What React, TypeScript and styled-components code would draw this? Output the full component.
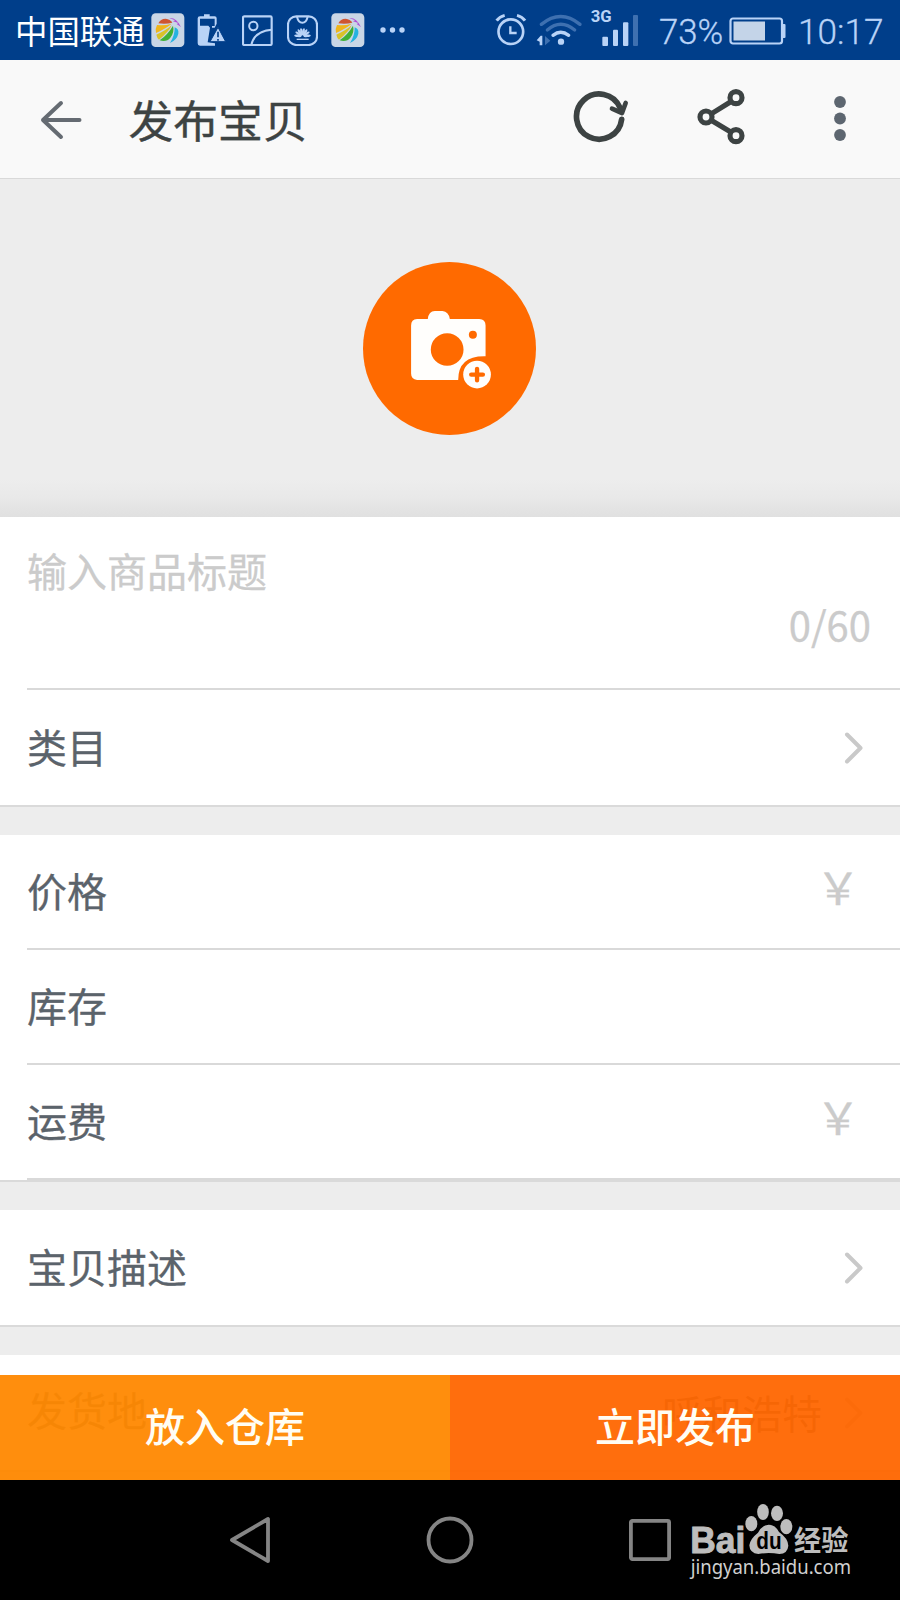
import React from 'react';
import styled, { createGlobalStyle } from 'styled-components';

const GlobalStyle = createGlobalStyle`
  * { box-sizing: border-box; }
  body { margin: 0; background: #000; }
`;

const Screen = styled.div`
  width: 900px;
  height: 1600px;
  display: flex;
  flex-direction: column;
  overflow: hidden;
  background: #ededed;
  font-family: 'Noto Sans CJK SC', sans-serif;
  color: #5b636b;
`;

const Icon = styled.svg<{ $w: number; $h: number; $ml?: number; $mt?: number }>`
  display: block;
  flex: none;
  width: ${(p) => p.$w}px;
  height: ${(p) => p.$h}px;
  margin-left: ${(p) => p.$ml ?? 0}px;
  margin-top: ${(p) => p.$mt ?? 0}px;
`;

const StatusBar = styled.div`
  flex: none;
  height: 60px;
  display: flex;
  align-items: flex-start;
  justify-content: space-between;
  background: #003e8a;
`;

const StatusGroup = styled.div`
  display: flex;
  align-items: flex-start;
`;

const Carrier = styled.span`
  width: 135px;
  margin-left: 15px;
  font-size: 32.4px;
  line-height: 60px;
  height: 60px;
  color: #fff;
  white-space: nowrap;
`;

const StatusText = styled.span<{ $w: number; $ml?: number; $size?: number }>`
  width: ${(p) => p.$w}px;
  margin-left: ${(p) => p.$ml ?? 0}px;
  font-family: Roboto, sans-serif;
  font-weight: 300;
  font-size: ${(p) => p.$size ?? 34.5}px;
  line-height: 60px;
  height: 60px;
  margin-top: 2px;
  color: #b9d3f7;
  white-space: nowrap;
  -webkit-text-stroke: 0.3px #b9d3f7;
`;

const Header = styled.header`
  flex: none;
  height: 119px;
  display: flex;
  align-items: flex-start;
  background: #f9f9f9;
  border-bottom: 1px solid #d9d9d9;
`;

const Title = styled.h1`
  margin: 0 0 0 47px;
  width: 443px;
  font-size: 44.8px;
  font-weight: 400;
  line-height: 118px;
  height: 118px;
  color: #3d4343;
  -webkit-text-stroke: 0.4px #3d4343;
`;

const Banner = styled.section`
  flex: none;
  height: 338px;
  display: flex;
  align-items: center;
  justify-content: center;
  padding-right: 2px;
  background: linear-gradient(#ededed 300px, #e9e9e9 318px, #e0e0e0);
`;

const CameraButton = styled.button`
  width: 173px;
  height: 173px;
  padding: 0;
  border: 0;
  border-radius: 50%;
  background: #ff6a00;
`;

const Content = styled.main`
  flex: none;
  height: 963px;
  position: relative;
  overflow: hidden;
`;

const Group = styled.section`
  background: #fff;
  border-bottom: 2px solid #dadada;
  margin-bottom: 28px;
`;

const TitleField = styled.div`
  height: 173px;
  margin-left: 27px;
  padding: 23px 29px 0 0;
  border-bottom: 2px solid #d9d9d9;
  color: #cbcbcb;
  font-size: 40px;
  line-height: 60px;
  -webkit-text-stroke: 0.3px #cbcbcb;
`;

const Counter = styled.div`
  margin-top: -6px;
  text-align: right;
`;

const Row = styled.div<{ $height: number; $line?: boolean; $right?: number }>`
  height: ${(p) => p.$height}px;
  margin-left: 27px;
  padding-right: ${(p) => p.$right ?? 36}px;
  display: flex;
  align-items: center;
  border-bottom: ${(p) => (p.$line ? '2px solid #d9d9d9' : '0')};
  font-size: 40px;
`;

const Label = styled.span<{ $lift?: number }>`
  flex: 1;
  line-height: 60px;
  padding-bottom: ${(p) => p.$lift ?? 4}px;
  -webkit-text-stroke: 0.3px currentColor;
`;

const Value = styled.span`
  line-height: 60px;
  padding-bottom: 2px;
  margin-right: 22px;
`;

const Yen = styled.span`
  line-height: 60px;
  padding-bottom: 11px;
  font-size: 44px;
  color: #cbcbcb;
  -webkit-text-stroke: 0.4px #cbcbcb;
`;

const ActionBar = styled.div`
  position: absolute;
  left: 0;
  right: 0;
  bottom: 0;
  height: 105px;
  display: grid;
  grid-template-columns: 1fr 1fr;
`;

const Action = styled.button<{ $color: string }>`
  border: 0;
  padding: 0 0 6px;
  background: ${(p) => p.$color};
  color: #fffdf4;
  font: 500 40px/60px 'Noto Sans CJK SC', sans-serif;
`;

const NavBar = styled.nav`
  flex: none;
  position: relative;
  height: 120px;
  display: flex;
  align-items: center;
  padding-left: 229px;
  background: #000;
`;

const Watermark = styled.svg`
  position: absolute;
  left: 680px;
  top: 10px;
  width: 190px;
  height: 100px;
`;

const TINT = '#b9d3f7';

const BallIcon = ({ ml }: { ml: number }) => (
  <Icon $w={34} $h={34} $ml={ml} $mt={13} viewBox="32 23 102 102">
    <rect x="33" y="24" width="99" height="101" rx="13" fill="#c9d6e6" />
    <path d="M54 54 Q60 40 76 40 Q90 41 96 52 Q76 57 54 54Z" fill="#cf5532" />
    <path d="M50 59 Q74 61 94 55 Q78 69 47 83 Q44 70 50 59Z" fill="#efb51d" />
    <path d="M48 88 Q76 76 94 60 Q86 79 56 103 Q50 98 48 88Z" fill="#d8c229" />
    <path d="M98 61 Q103 81 90 97 Q79 111 58 105 Q84 86 98 61Z" fill="#3fb036" />
    <path d="M103 66 Q116 70 114 85 Q110 103 89 113 Q104 90 103 66Z" fill="#25b2e2" />
    <path d="M87 38 Q108 36 122 65 L109 56 L114 53 L98 48 L104 45Z" fill="#b04fd6" />
  </Icon>
);

const Chevron = () => (
  <Icon $w={20} $h={34} viewBox="0 0 20 34">
    <path d="M3 3.500 L16.500 17 L3 30.500" fill="none" stroke="#c9c9c9" strokeWidth="4" strokeLinecap="round" strokeLinejoin="round" />
  </Icon>
);

export default function App() {
  return (
    <Screen>
      <GlobalStyle />
      <StatusBar>
        <StatusGroup>
          <Carrier>中国联通</Carrier>
          <BallIcon ml={0.5} />
          <Icon $w={30} $h={34} $ml={12.5} $mt={13} viewBox="172 24 90 102">
            <path d="M174 40 Q174 34 181 34 H193 V28 H210 V34 H225 Q231 34 231 40 V56 L225 68 H217 V63 H225 V41 H181 V62 H206 L211 68 L204 112 L226 115 V122 H181 Q174 122 174 115Z" fill={TINT} />
            <path d="M235 67 L258 110 H211Z" fill={TINT} stroke="#003e8a" strokeWidth="3" />
            <path d="M235 80 V97 M235 102 V107" stroke="#003e8a" strokeWidth="5" />
          </Icon>
          <Icon $w={31} $h={31} $ml={14.5} $mt={14.5} viewBox="307 28 93 93">
            <rect x="310" y="32" width="86" height="86" rx="4" fill="none" stroke={TINT} strokeWidth="6.5" />
            <circle cx="341" cy="61" r="12.5" fill="none" stroke={TINT} strokeWidth="6" />
            <path d="M335 117 Q345 76 396 72" fill="none" stroke={TINT} strokeWidth="6" />
          </Icon>
          <Icon $w={31} $h={31} $ml={14} $mt={14.5} viewBox="441 28 93 93">
            <rect x="444" y="32" width="87" height="86" rx="25" fill="none" stroke={TINT} strokeWidth="6.5" />
            <path d="M471 33 Q475 51 487 51 Q499 51 503 33" fill="none" stroke={TINT} strokeWidth="6" />
            <g fill={TINT}>
              {[-84, -57, -33, -11, 11, 33, 57, 84].map((a) => (
                <ellipse key={a} cx="487.5" cy="78" rx="3.8" ry="11" transform={`rotate(${a} 487.5 92)`} />
              ))}
              <rect x="470" y="99" width="36" height="4" />
            </g>
          </Icon>
          <BallIcon ml={13} />
          <Icon $w={26} $h={8} $ml={15.5} $mt={26} viewBox="0 0 26 8">
            <g fill={TINT}>
              <circle cx="3" cy="4" r="2.7" />
              <circle cx="12.5" cy="4" r="2.7" />
              <circle cx="22" cy="4" r="2.7" />
            </g>
          </Icon>
        </StatusGroup>
        <StatusGroup>
          <Icon $w={178} $h={55} viewBox="45 0 534 165">
            <g fill="none" stroke={TINT} strokeWidth="8">
              <circle cx="92.5" cy="95" r="37" />
              <path d="M91 79 V99 H110" strokeWidth="7" />
              <path d="M50 62 Q58 50 74 46 M111 46 Q127 50 135 62" strokeWidth="9" />
            </g>
            <g fill="none" strokeWidth="10" strokeLinecap="round">
              <path d="M184 73 Q242 26 300 73" stroke="#3e70b0" />
              <path d="M202 90 Q242 56 284 90" stroke="#3e70b0" />
              <path d="M219 106 Q242 88 266 106" stroke={TINT} />
            </g>
            <circle cx="243" cy="125" r="9.5" fill={TINT} />
            <path d="M170 121 L182 107 H187 V136 H179 V125Z" fill={TINT} />
            <path d="M195 108 L211 122 L195 136Z" fill="#3e70b0" />
            <text x="332" y="67" fill={TINT} fontFamily="Roboto, sans-serif" fontWeight="700" fontSize="49" textLength="63" lengthAdjust="spacingAndGlyphs">3G</text>
            <g fill={TINT}>
              <rect x="367" y="110" width="17" height="28" rx="3" />
              <rect x="399" y="89" width="15" height="49" rx="3" />
              <rect x="429" y="67" width="16" height="71" rx="3" />
              <rect x="459" y="45" width="15" height="93" rx="3" fill="#3e70b0" />
            </g>
          </Icon>
          <StatusText $w={66} $ml={-14} $size={34.8}>73%</StatusText>
          <Icon $w={57} $h={28} $ml={4} $mt={16.5} viewBox="0 0 57 28">
            <rect x="1.5" y="1.5" width="51.5" height="25" rx="2.5" fill="none" stroke={TINT} strokeWidth="2.2" />
            <rect x="4.5" y="4.5" width="31.5" height="19" fill="#c4d4e8" />
            <rect x="53" y="7" width="3.5" height="14" rx="1" fill={TINT} />
          </Icon>
          <StatusText $w={102} $ml={12} $size={35.2}>10:17</StatusText>
        </StatusGroup>
      </StatusBar>

      <Header>
        <Icon $w={42} $h={40} $ml={39.5} $mt={40} viewBox="0 0 42 40">
          <path d="M21 3 L3 20 L21 37 M3 20 H39.5" fill="none" stroke="#656b72" strokeWidth="4" strokeLinecap="round" strokeLinejoin="round" />
        </Icon>
        <Title>发布宝贝</Title>
        <Icon $w={56} $h={54} $ml={1.5} $mt={29} viewBox="369 267 168 162">
          <path d="M515 358 A68 68 0 1 1 510 323" fill="none" stroke="#3d4343" strokeWidth="17" strokeLinecap="round" />
          <path d="M486 326 L516 339 L527 309" fill="none" stroke="#3d4343" strokeWidth="14" strokeLinecap="round" strokeLinejoin="round" />
        </Icon>
        <Icon $w={49} $h={58} $ml={68} $mt={28} viewBox="740 264 147 174">
          <g fill="none" stroke="#3d4343" strokeWidth="15.5">
            <path d="M785 340 L840 306 M785 362 L840 395" />
            <circle cx="767" cy="351" r="18" />
            <circle cx="857" cy="293" r="18" />
            <circle cx="857" cy="407" r="18" />
          </g>
        </Icon>
        <Icon $w={14} $h={48} $ml={87} $mt={35} viewBox="0 0 14 48">
          <g fill="#5d6670">
            <circle cx="7" cy="7" r="5.9" />
            <circle cx="7" cy="23.5" r="5.9" />
            <circle cx="7" cy="40" r="5.9" />
          </g>
        </Icon>
      </Header>

      <Banner>
        <CameraButton aria-label="添加图片">
          <Icon $w={173} $h={173} viewBox="67 66 518 518">
            <path d="M229 237 H261 Q264 213 282 213 H305 Q323 214 327 237 H415 Q434 238 434 256 V348 Q352 346 352 419 H229 Q211 418 211 400 V256 Q211 238 229 237Z" fill="#fffefc" />
            <circle cx="319" cy="328" r="49" fill="#ff6a00" />
            <circle cx="396" cy="283.5" r="12" fill="#ff6a00" />
            <circle cx="408.5" cy="403" r="41.5" fill="#fffefc" />
            <path d="M408.5 386 V420 M391 403 H426" stroke="#ff6a00" strokeWidth="13" strokeLinecap="round" />
          </Icon>
        </CameraButton>
      </Banner>

      <Content>
        <Group>
          <TitleField>
            输入商品标题
            <Counter>0/60</Counter>
          </TitleField>
          <Row $height={115}>
            <Label>类目</Label>
            <Chevron />
          </Row>
        </Group>
        <Group>
          <Row $height={115} $line $right={40}>
            <Label>价格</Label>
            <Yen>￥</Yen>
          </Row>
          <Row $height={115} $line>
            <Label>库存</Label>
          </Row>
          <Row $height={115} $line $right={40}>
            <Label>运费</Label>
            <Yen>￥</Yen>
          </Row>
        </Group>
        <Group>
          <Row $height={115}>
            <Label>宝贝描述</Label>
            <Chevron />
          </Row>
        </Group>
        <Group>
          <Row $height={115}>
            <Label $lift={7}>发货地</Label>
            <Value>呼和浩特</Value>
            <Chevron />
          </Row>
        </Group>
        <ActionBar>
          <Action $color="rgba(255, 136, 0, 0.95)">放入仓库</Action>
          <Action $color="rgba(255, 102, 0, 0.95)">立即发布</Action>
        </ActionBar>
      </Content>

      <NavBar>
        <Icon $w={42} $h={48} viewBox="0 0 42 48">
          <path d="M39 3 V45 L3 24Z" fill="none" stroke="#858585" strokeWidth="3.8" strokeLinejoin="round" />
        </Icon>
        <Icon $w={48} $h={48} $ml={155} viewBox="0 0 48 48">
          <circle cx="24" cy="24" r="21.5" fill="none" stroke="#858585" strokeWidth="3.8" />
        </Icon>
        <Icon $w={44} $h={44} $ml={154} viewBox="0 0 44 44">
          <rect x="2.9" y="2.9" width="38.2" height="38.2" rx="1.5" fill="none" stroke="#858585" strokeWidth="3.8" />
        </Icon>
        <Watermark viewBox="0 0 570 300">
          <g fill="#bdbdbd">
            <text x="31" y="188" fontFamily="'Liberation Sans', sans-serif" fontWeight="700" fontSize="109" textLength="165" lengthAdjust="spacingAndGlyphs" stroke="#bdbdbd" strokeWidth="3">Bai</text>
            <ellipse cx="214" cy="101" rx="18" ry="23" />
            <ellipse cx="249" cy="66" rx="17.5" ry="24" />
            <ellipse cx="291" cy="70" rx="18" ry="23" />
            <ellipse cx="319" cy="110" rx="18" ry="23" />
            <path d="M266 104 Q286 104 297 126 Q324 145 325 167 Q323 191 298 192 Q266 186 235 192 Q209 190 208 166 Q210 147 234 128 Q246 105 266 104Z" />
            <text x="342" y="183" fontFamily="'Noto Sans CJK SC', sans-serif" fontWeight="700" fontSize="84" textLength="163" lengthAdjust="spacingAndGlyphs">经验</text>
            <text x="32" y="251" fill="#d0d0d0" fontFamily="'Noto Sans', sans-serif" fontSize="61" textLength="481" lengthAdjust="spacingAndGlyphs">jingyan.baidu.com</text>
          </g>
          <text x="229" y="178" fill="#000" fontFamily="'Liberation Sans', sans-serif" fontWeight="700" fontSize="70" textLength="76" lengthAdjust="spacingAndGlyphs">du</text>
        </Watermark>
      </NavBar>
    </Screen>
  );
}
